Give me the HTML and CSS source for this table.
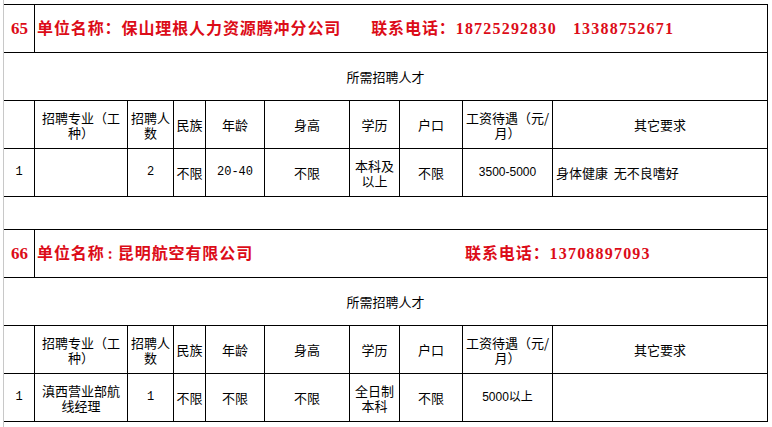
FILE: index.html
```html
<!DOCTYPE html>
<html lang="zh-CN">
<head>
<meta charset="utf-8">
<title>招聘信息</title>
<link rel="stylesheet" href="styles.css">
</head>
<body>
<div class="sheet">
<table class="grid">
  <colgroup>
    <col class="c1"><col class="c2"><col class="c3"><col class="c4"><col class="c5">
    <col class="c6"><col class="c7"><col class="c8"><col class="c9"><col class="c10">
  </colgroup>
  <tbody>
    <tr>
      <td class="idx red">65</td>
      <td colspan="9" class="title red"><span class="name">单位名称：保山理根人力资源腾冲分公司</span><span class="contact a">联系电话：</span><span class="num">18725292830</span><span class="num gap2">13388752671</span></td>
    </tr>
    <tr><td colspan="10" class="caption">所需招聘人才</td></tr>
    <tr class="head">
      <td></td><td>招聘专业（工种）</td><td>招聘人数</td><td>民族</td><td>年龄</td>
      <td>身高</td><td>学历</td><td>户口</td><td>工资待遇（元/月）</td><td>其它要求</td>
    </tr>
    <tr class="data">
      <td class="mono">1</td><td></td><td class="mono">2</td><td>不限</td><td class="mono">20-40</td>
      <td>不限</td><td>本科及以上</td><td>不限</td><td class="sans">3500-5000</td><td class="left">身体健康&nbsp;&nbsp;无不良嗜好</td>
    </tr>
    <tr class="blank"><td colspan="10"></td></tr>
    <tr>
      <td class="idx red">66</td>
      <td colspan="9" class="title red"><span class="name">单位名称<span class="colon">:</span>昆明航空有限公司</span><span class="contact b">联系电话：</span><span class="num">13708897093</span></td>
    </tr>
    <tr><td colspan="10" class="caption">所需招聘人才</td></tr>
    <tr class="head">
      <td></td><td>招聘专业（工种）</td><td>招聘人数</td><td>民族</td><td>年龄</td>
      <td>身高</td><td>学历</td><td>户口</td><td>工资待遇（元/月）</td><td>其它要求</td>
    </tr>
    <tr class="data">
      <td class="mono">1</td><td>滇西营业部航线经理</td><td class="mono">1</td><td>不限</td><td>不限</td>
      <td>不限</td><td>全日制本科</td><td>不限</td><td class="sans">5000以上</td><td class="left"></td>
    </tr>
  </tbody>
</table>
</div>
</body>
</html>
```

FILE: styles.css
```css
html, body {
  margin: 0;
  padding: 0;
  background: #ffffff;
}

.sheet {
  margin-left: 3px;
  border-left: 1px solid #c8c8c8;
  height: 427px;
  padding-top: 4px;
  box-sizing: border-box;
  overflow: hidden;
}

.grid {
  width: 764px;
  table-layout: fixed;
  border-collapse: separate;
  border-spacing: 0;
  border-top: 1px solid #000;
  font-family: "Noto Sans CJK SC", sans-serif;
  font-size: 13px;
  line-height: 15px;
  color: #000;
}

.c1 { width: 31px; }
.c2 { width: 93px; }
.c3 { width: 46px; }
.c4 { width: 32px; }
.c5 { width: 59px; }
.c6 { width: 85px; }
.c7 { width: 50px; }
.c8 { width: 63px; }
.c9 { width: 90px; }
.c10 { width: 215px; }

.grid td {
  height: 48px;
  box-sizing: border-box;
  padding: 0 2px;
  border-right: 1px solid #000;
  border-bottom: 1px solid #000;
  text-align: center;
  vertical-align: middle;
  overflow: hidden;
}

.grid .blank td {
  height: 33px;
}

.red {
  color: #dc0c18;
  font-weight: 700;
  font-family: "Liberation Serif", "Noto Sans CJK SC", serif;
  font-size: 16px;
}

.grid td.idx {
  padding: 0 0 0 1px;
  text-align: center;
  font-size: 17px;
}

.grid td.title {
  text-align: left;
  padding-left: 2px;
  white-space: nowrap;
}

.title .name,
.title .contact {
  letter-spacing: 0.9px;
}

.title .contact.a { margin-left: 30px; }
.title .contact.b { margin-left: 212px; }

.title .num {
  letter-spacing: 1.2px;
  margin-left: 0;
}

.title .num.gap2 { margin-left: 16px; }

.title .colon {
  margin: 0 4px 0 3px;
}

.grid td.caption {
  text-align: center;
}

.grid td.left {
  text-align: left;
  padding-left: 3px;
}

.grid td.mono {
  font-family: "Liberation Mono", monospace;
  font-size: 12px;
}

.grid td.sans {
  font-family: "Liberation Sans", "Noto Sans CJK SC", sans-serif;
  font-size: 12px;
}
```
